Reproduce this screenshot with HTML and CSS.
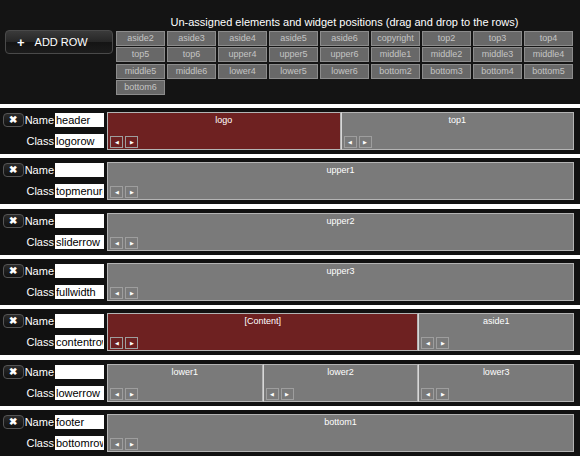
FILE: index.html
```html
<!DOCTYPE html>
<html lang="en">
<head>
    <meta charset="utf-8">
    <title>Layout rows</title>
    <link rel="stylesheet" href="styles.css">
</head>
<body>
    <div class="pool">
        <div class="pool-side">
            <button class="add-row"><span class="plus">+</span>ADD ROW</button>
        </div>
        <div class="pool-main">
            <div class="pool-title">Un-assigned elements and widget positions (drag and drop to the rows)</div>
            <div class="tiles">
                <div class="tile">aside2</div>
                <div class="tile">aside3</div>
                <div class="tile">aside4</div>
                <div class="tile">aside5</div>
                <div class="tile">aside6</div>
                <div class="tile">copyright</div>
                <div class="tile">top2</div>
                <div class="tile">top3</div>
                <div class="tile">top4</div>
                <div class="tile">top5</div>
                <div class="tile">top6</div>
                <div class="tile">upper4</div>
                <div class="tile">upper5</div>
                <div class="tile">upper6</div>
                <div class="tile">middle1</div>
                <div class="tile">middle2</div>
                <div class="tile">middle3</div>
                <div class="tile">middle4</div>
                <div class="tile">middle5</div>
                <div class="tile">middle6</div>
                <div class="tile">lower4</div>
                <div class="tile">lower5</div>
                <div class="tile">lower6</div>
                <div class="tile">bottom2</div>
                <div class="tile">bottom3</div>
                <div class="tile">bottom4</div>
                <div class="tile">bottom5</div>
                <div class="tile">bottom6</div>
            </div>
        </div>
    </div>

    <div class="rows">
        <div class="row">
            <div class="row-side">
                <div class="field"><button class="del">&#10006;</button><label>Name</label><input type="text" value="header"></div>
                <div class="field"><label>Class</label><input type="text" value="logorow"></div>
            </div>
            <div class="zones">
                <div class="zone active" style="width: 50%"><span class="zone-name">logo</span><div class="moves"><button class="move">&#9664;</button><button class="move">&#9654;</button></div></div>
                <div class="zone" style="width: 50%"><span class="zone-name">top1</span><div class="moves"><button class="move">&#9664;</button><button class="move">&#9654;</button></div></div>
            </div>
        </div>

        <div class="row">
            <div class="row-side">
                <div class="field"><button class="del">&#10006;</button><label>Name</label><input type="text" value=""></div>
                <div class="field"><label>Class</label><input type="text" value="topmenurow"></div>
            </div>
            <div class="zones">
                <div class="zone" style="width: 100%"><span class="zone-name">upper1</span><div class="moves"><button class="move">&#9664;</button><button class="move">&#9654;</button></div></div>
            </div>
        </div>

        <div class="row">
            <div class="row-side">
                <div class="field"><button class="del">&#10006;</button><label>Name</label><input type="text" value=""></div>
                <div class="field"><label>Class</label><input type="text" value="sliderrow"></div>
            </div>
            <div class="zones">
                <div class="zone" style="width: 100%"><span class="zone-name">upper2</span><div class="moves"><button class="move">&#9664;</button><button class="move">&#9654;</button></div></div>
            </div>
        </div>

        <div class="row">
            <div class="row-side">
                <div class="field"><button class="del">&#10006;</button><label>Name</label><input type="text" value=""></div>
                <div class="field"><label>Class</label><input type="text" value="fullwidth"></div>
            </div>
            <div class="zones">
                <div class="zone" style="width: 100%"><span class="zone-name">upper3</span><div class="moves"><button class="move">&#9664;</button><button class="move">&#9654;</button></div></div>
            </div>
        </div>

        <div class="row">
            <div class="row-side">
                <div class="field"><button class="del">&#10006;</button><label>Name</label><input type="text" value=""></div>
                <div class="field"><label>Class</label><input type="text" value="contentrow"></div>
            </div>
            <div class="zones">
                <div class="zone active" style="width: 66.667%"><span class="zone-name">[Content]</span><div class="moves"><button class="move">&#9664;</button><button class="move">&#9654;</button></div></div>
                <div class="zone" style="width: 33.333%"><span class="zone-name">aside1</span><div class="moves"><button class="move">&#9664;</button><button class="move">&#9654;</button></div></div>
            </div>
        </div>

        <div class="row">
            <div class="row-side">
                <div class="field"><button class="del">&#10006;</button><label>Name</label><input type="text" value=""></div>
                <div class="field"><label>Class</label><input type="text" value="lowerrow"></div>
            </div>
            <div class="zones">
                <div class="zone" style="width: 33.333%"><span class="zone-name">lower1</span><div class="moves"><button class="move">&#9664;</button><button class="move">&#9654;</button></div></div>
                <div class="zone" style="width: 33.333%"><span class="zone-name">lower2</span><div class="moves"><button class="move">&#9664;</button><button class="move">&#9654;</button></div></div>
                <div class="zone" style="width: 33.333%"><span class="zone-name">lower3</span><div class="moves"><button class="move">&#9664;</button><button class="move">&#9654;</button></div></div>
            </div>
        </div>

        <div class="row">
            <div class="row-side">
                <div class="field"><button class="del">&#10006;</button><label>Name</label><input type="text" value="footer"></div>
                <div class="field"><label>Class</label><input type="text" value="bottomrow"></div>
            </div>
            <div class="zones">
                <div class="zone" style="width: 100%"><span class="zone-name">bottom1</span><div class="moves"><button class="move">&#9664;</button><button class="move">&#9654;</button></div></div>
            </div>
        </div>
    </div>
</body>
</html>
```

FILE: styles.css
```css
body {
    margin: 0;
    background-color: #fff;
    color: #fff;
    font-family: "Liberation Sans", Arial, sans-serif;
    overflow: hidden;
}

/* unassigned elements pool */
.pool {
    display: flex;
    background-color: #141414;
    padding: 14px 0 9px 0;
}

.pool-side {
    width: 116px;
    flex: none;
}

.add-row {
    display: flex;
    align-items: center;
    width: 108px;
    height: 24px;
    margin: 16px 0 0 5px;
    padding: 0 0 0 11px;
    border: 1px solid #4a4a4a;
    border-radius: 4px;
    background: linear-gradient(#3a3a3a, #262626 50%, #141414 51%, #1c1c1c);
    color: #fff;
    font-family: "Liberation Sans", Arial, sans-serif;
    font-size: 11px;
    cursor: pointer;
}

.plus {
    font-weight: bold;
    font-size: 13px;
    margin-right: 10px;
}

.pool-main {
    width: 457px;
}

.pool-title {
    text-align: center;
    font-size: 11px;
    line-height: 16px;
    margin-bottom: 1px;
}

.tiles {
    display: grid;
    grid-template-columns: repeat(9, 49px);
    grid-auto-rows: 15px;
    column-gap: 2px;
    row-gap: 1.33px;
}

.tile {
    box-sizing: border-box;
    border: 1px solid #8c8c8c;
    background-color: #686868;
    color: #c4c4c4;
    font-size: 9px;
    line-height: 13px;
    text-align: center;
}

/* layout rows */
.rows {
    border-top: 4px solid #fff;
    display: flex;
    flex-direction: column;
    gap: 4.33px;
}

.row {
    display: flex;
    height: 46px;
    background-color: #111;
}

.row-side {
    width: 107px;
    flex: none;
    box-sizing: border-box;
    padding: 5px 3px 0 0;
    display: flex;
    flex-direction: column;
    align-items: flex-end;
    gap: 7px;
}

.field {
    display: flex;
    align-items: center;
    height: 14px;
}

.field label {
    font-size: 11px;
    margin-right: 1px;
}

.field input {
    box-sizing: border-box;
    width: 49px;
    height: 14px;
    margin: 0;
    padding: 0 1px;
    border: none;
    background-color: #fff;
    color: #000;
    font-family: "Liberation Sans", Arial, sans-serif;
    font-size: 11px;
}

.del {
    box-sizing: border-box;
    width: 21px;
    height: 14px;
    margin: 0 1px 0 0;
    padding: 0;
    border: 1px solid #555;
    border-radius: 4px;
    background: linear-gradient(#2a2a2a, #111);
    color: #fff;
    font-size: 10px;
    font-weight: bold;
    line-height: 12px;
    cursor: pointer;
}

.zones {
    flex: 1;
    display: flex;
    margin: 4px 6px 4px 0;
}

.zone {
    box-sizing: border-box;
    display: flex;
    flex-direction: column;
    border: 1px solid #b4b4b4;
    background-color: #7a7a7a;
    padding: 2px 2px 1px 2px;
    min-width: 0;
}

.zone + .zone {
    border-left-color: #d8d8d8;
}

.zone.active {
    background-color: #6e2121;
}

.zone-name {
    text-align: center;
    font-size: 9px;
    line-height: 11px;
}

.moves {
    display: flex;
    gap: 2px;
    margin-top: auto;
}

.move {
    box-sizing: border-box;
    width: 13px;
    height: 12px;
    margin: 0;
    padding: 0;
    border: 1px solid #9e9e9e;
    background: transparent;
    color: #fff;
    font-size: 5px;
    line-height: 10px;
    cursor: pointer;
}
```
